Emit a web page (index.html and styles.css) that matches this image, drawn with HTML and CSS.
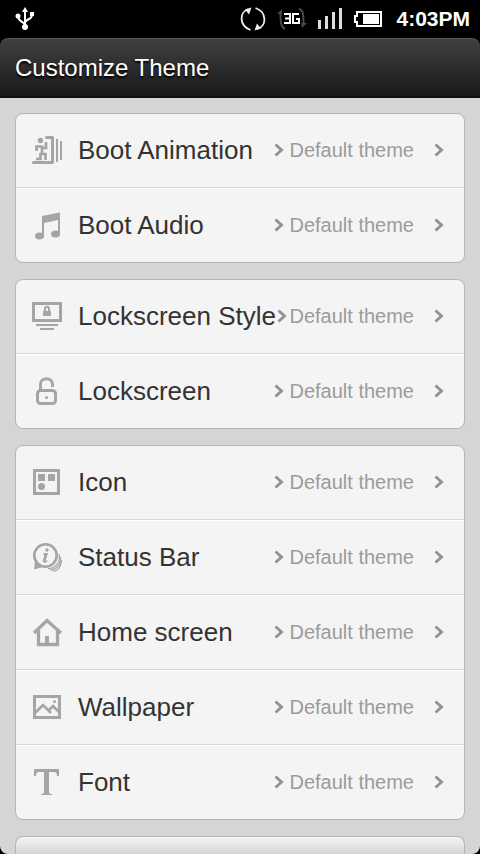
FILE: index.html
```html
<!DOCTYPE html>
<html lang="en">
<head>
<meta charset="utf-8">
<meta name="viewport" content="width=device-width, initial-scale=1">
<title>Customize Theme</title>
<link rel="stylesheet" href="styles.css">
</head>
<body>
<svg class="defs" aria-hidden="true">
  <symbol id="chevron" viewBox="0 0 10 14"><path d="M1.500 1.500 7.500 7l-6 5.500" fill="none" stroke="currentColor" stroke-width="2.900"/></symbol>
</svg>
<div class="screen">
  <div class="status">
    <svg class="usb" width="20" height="24" viewBox="0 0 20 24" fill="none" stroke="#fff" stroke-width="2"><path d="M10 20V3M10 18c0-3-7-3-7-9M10 16c0-4 7-3 7-8"/><path d="M7 5 10 0 13 5z" fill="#fff" stroke="none"/><circle cx="10" cy="20" r="3" fill="#fff" stroke="none"/><circle cx="3" cy="9" r="2.500" fill="#fff" stroke="none"/><path d="M15 5h4v4h-4z" fill="#fff" stroke="none"/></svg>
    <svg width="26" height="26" viewBox="0 0 26 26" fill="none" stroke="#eee" stroke-width="1.800"><path d="M10.500 24C-1 20-1 6 8.500 3M15.500 2C27 6 27 20 17.500 23"/><path d="M5 3.500 11.500 1.500 9 8.500zM21 22.500 14.500 24.500 17 17.500z" fill="#eee" stroke="none"/></svg>
    <svg width="30" height="22" viewBox="0 0 30 22" fill="none"><path d="M8 21C4 19 3.500 16 3.500 4M22 1c4 1 4.500 4 4.500 16" stroke="#484848" stroke-width="2"/><path d="M0 6 5 1v5zM24 15h6l-5 5z" fill="#484848"/><path d="M7 6h6v9H7M8 10.500h5M22 6h-6v9h6v-4h-3" stroke="#fff" stroke-width="2"/></svg>
    <svg width="25" height="22" viewBox="0 0 25 22" fill="#ddd"><path d="M0 12h3v9H0zM7 8h3v13H7zM14 4h3v17h-3zM21 0h3v21h-3z"/></svg>
    <svg width="28" height="16" viewBox="0 0 28 16"><path d="M3 1h24v14H3v-4H1V5h2z" fill="none" stroke="#fff" stroke-width="2"/><path d="M9 3h16v10H9z" fill="#fff"/></svg>
    <time>4:03PM</time>
  </div>
  <header class="header"><h1>Customize Theme</h1></header>
  <main class="content">
    <nav class="card" aria-label="Boot">
      <a class="row" href="#"><svg class="icon" viewBox="0 0 32 32"><g fill="none" stroke="currentColor" stroke-width="3"><path d="M2.500 28.500H21.500V3.500H15.500" stroke-linecap="round" stroke-linejoin="round"/><path d="M26 5v23M30 7v19" stroke-width="2"/><path d="M5.500 17v-4.500h5.500V14h4V8M11 12v8H9.500v5H5M11 20h3.500v6" stroke-width="2.700"/></g><circle cx="9.500" cy="6.500" r="2.700" fill="currentColor"/></svg><span class="label">Boot Animation</span><span class="value"><svg class="chevron"><use href="#chevron"/></svg>Default theme</span><svg class="chevron"><use href="#chevron"/></svg></a>
      <a class="row" href="#"><svg class="icon" viewBox="0 0 32 32"><path d="M11 7 29 3.500V25h-2V11l-14 3v13h-2z" fill="currentColor"/><ellipse cx="8.500" cy="27" rx="4.500" ry="3.500" fill="currentColor"/><ellipse cx="24.500" cy="25" rx="4.500" ry="3.500" fill="currentColor"/></svg><span class="label">Boot Audio</span><span class="value"><svg class="chevron"><use href="#chevron"/></svg>Default theme</span><svg class="chevron"><use href="#chevron"/></svg></a>
    </nav>
    <nav class="card" aria-label="Lockscreen">
      <a class="row" href="#"><svg class="icon" viewBox="0 0 32 32"><g fill="none" stroke="currentColor"><path d="M2.500 3.500h27v17h-27z" stroke-width="3"/><path d="M5 25h22M9 29h14" stroke-width="2"/><path d="M14 12V9c0-3 4-3 4 0v3" stroke-width="2"/></g><path d="M12 11h8v5h-8z" fill="currentColor"/></svg><span class="label">Lockscreen Style</span><span class="value value-tight"><svg class="chevron"><use href="#chevron"/></svg>Default theme</span><svg class="chevron"><use href="#chevron"/></svg></a>
      <a class="row" href="#"><svg class="icon" viewBox="0 0 32 32"><g fill="none" stroke="currentColor" stroke-width="3"><rect x="6.500" y="15.500" width="18" height="13" rx="3"/><path d="M9.500 15V9c0-7 12-7 12 0v3"/></g><circle cx="15.500" cy="22.500" r="1.500" fill="currentColor"/></svg><span class="label">Lockscreen</span><span class="value"><svg class="chevron"><use href="#chevron"/></svg>Default theme</span><svg class="chevron"><use href="#chevron"/></svg></a>
    </nav>
    <nav class="card" aria-label="Appearance">
      <a class="row" href="#"><svg class="icon" viewBox="0 0 32 32"><path d="M3.500 4.500h24v23h-24z" fill="none" stroke="currentColor" stroke-width="3"/><path d="M7 8h7v7H7zM17 8h7v7h-7z" fill="currentColor"/><circle cx="10.500" cy="20.500" r="3.500" fill="currentColor"/></svg><span class="label">Icon</span><span class="value"><svg class="chevron"><use href="#chevron"/></svg>Default theme</span><svg class="chevron"><use href="#chevron"/></svg></a>
      <a class="row" href="#"><svg class="icon" viewBox="0 0 32 32"><g fill="none" stroke="currentColor"><circle cx="14.500" cy="14.500" r="11.200" stroke-width="2.600"/><path d="M28 13c2 8-4 15-11 14.500M29.500 16c1 8-5 13-10.500 13M30.500 19c0 7-4 11-8.500 11.500" stroke-width="1.200"/></g><path d="M4 20 3 28.500 12 26zM13 12h4l-2.500 8 2-1-.5 2c-2 1-5 1-4-2l1.500-5H12z" fill="currentColor"/><circle cx="16" cy="9" r="1.700" fill="currentColor"/></svg><span class="label">Status Bar</span><span class="value"><svg class="chevron"><use href="#chevron"/></svg>Default theme</span><svg class="chevron"><use href="#chevron"/></svg></a>
      <a class="row" href="#"><svg class="icon" viewBox="0 0 32 32"><path d="M3 17 16 4.500 30 17M7.500 14v14.500h19V14" fill="none" stroke="currentColor" stroke-width="3.300"/><path d="M14 20h4v8h-4z" fill="currentColor"/></svg><span class="label">Home screen</span><span class="value"><svg class="chevron"><use href="#chevron"/></svg>Default theme</span><svg class="chevron"><use href="#chevron"/></svg></a>
      <a class="row" href="#"><svg class="icon" viewBox="0 0 32 32"><g fill="none" stroke="currentColor" stroke-width="3"><path d="M3.500 5.500h25v21h-25z"/><path d="m4 22 8-8 8 8M17 20l5-5 6 6" stroke-width="2.600"/></g><circle cx="23.500" cy="10.500" r="1.500" fill="currentColor"/></svg><span class="label">Wallpaper</span><span class="value"><svg class="chevron"><use href="#chevron"/></svg>Default theme</span><svg class="chevron"><use href="#chevron"/></svg></a>
      <a class="row" href="#"><svg class="icon" viewBox="0 0 32 32"><path d="M3 3h25v7h-2c0-3-1-4-3-4h-5v19c0 3 1 3 3 3v1H10v-1c2 0 3 0 3-3V6H8c-2 0-3 1-3 4H3z" fill="currentColor"/></svg><span class="label">Font</span><span class="value"><svg class="chevron"><use href="#chevron"/></svg>Default theme</span><svg class="chevron"><use href="#chevron"/></svg></a>
    </nav>
    <div class="card card-peek"></div>
  </main>
</div>
</body>
</html>
```
FILE: styles.css
```css
* { box-sizing: border-box; }
body { margin: 0; background: #000; font-family: "Liberation Sans", Arial, sans-serif; }
.defs { position: absolute; width: 0; height: 0; }
.screen { display: flex; flex-direction: column; height: 100vh; overflow: hidden; }
.status { display: flex; align-items: center; gap: 11px; flex: none; height: 38px; padding: 0 10px 0 15px; color: #fff; }
.status svg { flex: none; }
.status .usb { margin-right: auto; }
.status time { font-size: 21px; font-weight: bold; line-height: 24px; margin-left: 3px; }
.header { flex: none; height: 60px; padding: 0 15px; border-top: 1px solid #555; border-bottom: 2px solid #111; border-radius: 8px 8px 0 0; background: linear-gradient(#404040, #191919); }
.header h1 { margin: 0; color: #fff; font-size: 24px; font-weight: normal; line-height: 58px; text-shadow: 0 2px 2px #000; }
.content { display: flex; flex-direction: column; gap: 16px; flex: 1; min-height: 0; overflow: hidden; padding: 15px 15px 0; background: #d5d5d5; border-radius: 0 0 8px 8px; }
.card { flex: none; overflow: hidden; border: 1px solid #b5b5b5; border-radius: 8px; background: #f4f4f4; }
.card-peek { height: 18px; border-bottom: 0; border-radius: 8px 8px 0 0; background: linear-gradient(#f4f4f4, #d5d5d5); }
.row { display: flex; align-items: center; height: 75px; padding: 0 20px 0 15px; border-bottom: 1px solid #d8d8d8; box-shadow: inset 0 1px #fff; color: #333; text-decoration: none; }
.row:first-child { height: 74px; padding-bottom: 1px; box-shadow: none; }
.row:last-child { height: 74px; border-bottom: 0; }
.icon { flex: none; width: 32px; height: 32px; margin-right: 15px; color: #a5a5a5; }
.label { flex: 1; min-width: 0; font-size: 26px; line-height: 32px; white-space: nowrap; }
.value { display: flex; align-items: center; gap: 5px; margin-right: 20px; color: #9b9b9b; font-size: 20px; line-height: 24px; white-space: nowrap; }
.value-tight { gap: 2px; }
.chevron { flex: none; width: 10px; height: 14px; color: #929292; }
```
